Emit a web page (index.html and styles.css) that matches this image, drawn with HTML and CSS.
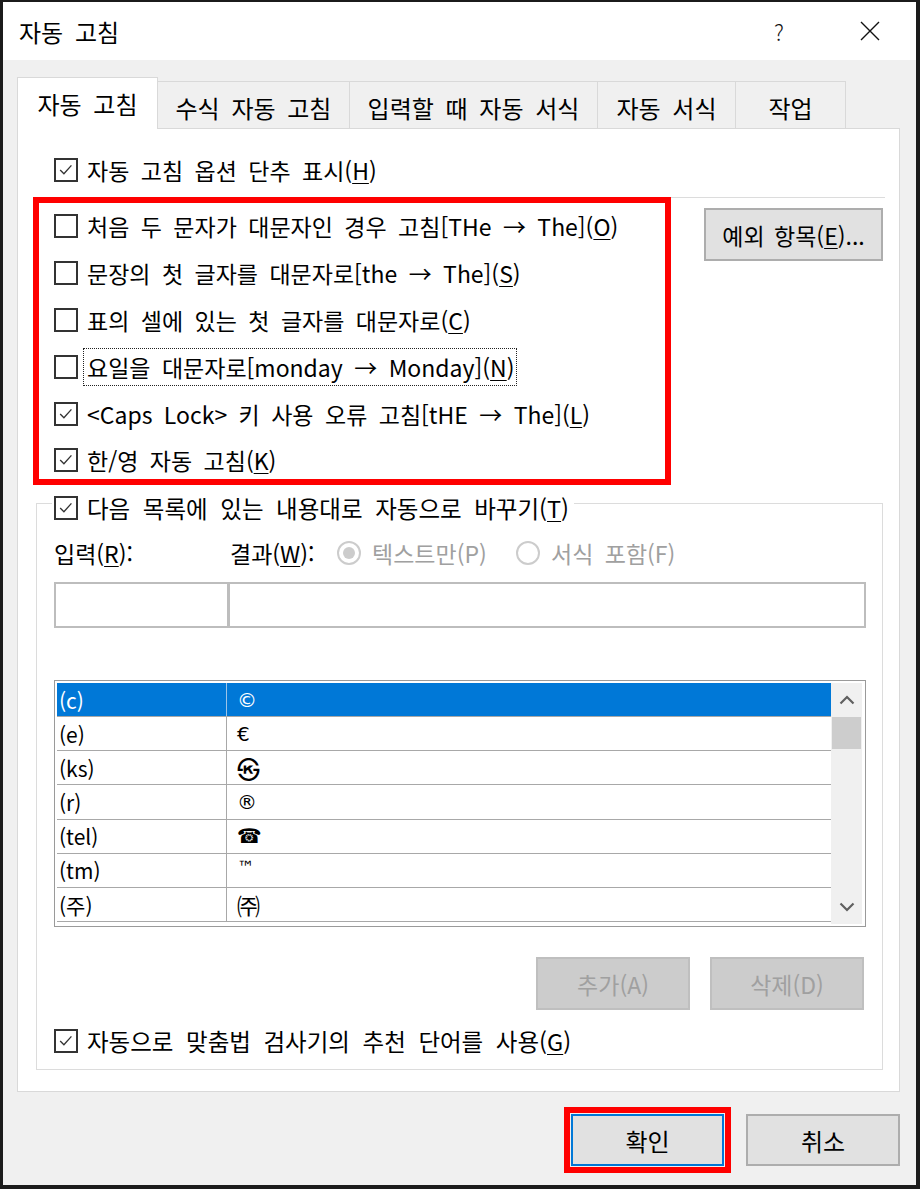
FILE: index.html
```html
<!DOCTYPE html>
<html lang="ko">
<head>
<meta charset="utf-8">
<title>자동 고침</title>
<link rel="stylesheet" href="styles.css">
</head>
<body>
<div class="window">
  <div class="titlebar">
    <span class="title">자동 고침</span>
    <span class="help">?</span>
    <span class="close"><svg width="20" height="20" viewBox="0 0 20 20"><path d="M1 1 L19 19 M19 1 L1 19" stroke="#111" stroke-width="1.4" fill="none"/></svg></span>
  </div>
  <div class="body">
    <div class="tabs">
      <div class="tab active t1">자동 고침</div>
      <div class="tab t2">수식 자동 고침</div>
      <div class="tab t3">입력할 때 자동 서식</div>
      <div class="tab t4">자동 서식</div>
      <div class="tab t5">작업</div>
    </div>
    <div class="panel">
      <div class="check top-check"><span class="box on"><svg viewBox="0 0 24 24"><path d="M5 12 L9.5 16.5 L18.5 6.5" stroke="#333" stroke-width="1.6" fill="none"/></svg></span><span>자동 고침 옵션 단추 표시(<u>H</u>)</span></div>
      <div class="sep"></div>
      <div class="opts">
        <div class="redbox">
          <div class="check"><span class="box"></span><span>처음 두 문자가 대문자인 경우 고침[THe → The](<u>O</u>)</span></div>
          <div class="check"><span class="box"></span><span>문장의 첫 글자를 대문자로[the → The](<u>S</u>)</span></div>
          <div class="check"><span class="box"></span><span>표의 셀에 있는 첫 글자를 대문자로(<u>C</u>)</span></div>
          <div class="check"><span class="box"></span><span class="focus">요일을 대문자로[monday → Monday](<u>N</u>)</span></div>
          <div class="check"><span class="box on"><svg viewBox="0 0 24 24"><path d="M5 12 L9.5 16.5 L18.5 6.5" stroke="#333" stroke-width="1.6" fill="none"/></svg></span><span>&lt;Caps Lock&gt; 키 사용 오류 고침[tHE → The](<u>L</u>)</span></div>
          <div class="check"><span class="box on"><svg viewBox="0 0 24 24"><path d="M5 12 L9.5 16.5 L18.5 6.5" stroke="#333" stroke-width="1.6" fill="none"/></svg></span><span>한/영 자동 고침(<u>K</u>)</span></div>
        </div>
        <div class="btn except">예외 항목(<u>E</u>)...</div>
      </div>
      <div class="group">
        <div class="legend check"><span class="box on"><svg viewBox="0 0 24 24"><path d="M5 12 L9.5 16.5 L18.5 6.5" stroke="#333" stroke-width="1.6" fill="none"/></svg></span><span class="wide">다음 목록에 있는 내용대로 자동으로 바꾸기(<u>T</u>)</span></div>
        <div class="labels">
          <span class="lbl-in">입력(<u>R</u>):</span>
          <span class="lbl-out">결과(<u>W</u>):</span>
          <span class="opt opt1"><span class="radio on"></span>텍스트만(P)</span>
          <span class="opt"><span class="radio"></span>서식 포함(F)</span>
        </div>
        <div class="inputs">
          <div class="in-left"></div>
          <div class="in-right"></div>
        </div>
        <div class="list">
          <div class="rows">
            <div class="row sel"><span class="c1">(c)</span><span class="c2">©</span></div>
            <div class="row"><span class="c1">(e)</span><span class="c2">€</span></div>
            <div class="row"><span class="c1">(ks)</span><span class="c2 cjk">㉿</span></div>
            <div class="row"><span class="c1">(r)</span><span class="c2">®</span></div>
            <div class="row"><span class="c1">(tel)</span><span class="c2">☎</span></div>
            <div class="row"><span class="c1">(tm)</span><span class="c2 small">™</span></div>
            <div class="row"><span class="c1">(주)</span><span class="c2 cjk">㈜</span></div>
          </div>
          <div class="scroll">
            <div class="arrow"><svg width="16" height="10" viewBox="0 0 16 10"><path d="M1.5 8.5 L8 2 L14.5 8.5" stroke="#606060" stroke-width="2.2" fill="none"/></svg></div>
            <div class="thumb"></div>
            <div class="track"></div>
            <div class="arrow"><svg width="16" height="10" viewBox="0 0 16 10"><path d="M1.5 1.5 L8 8 L14.5 1.5" stroke="#606060" stroke-width="2.2" fill="none"/></svg></div>
          </div>
        </div>
        <div class="btn-row">
          <div class="btn disabled">추가(A)</div>
          <div class="btn disabled">삭제(D)</div>
        </div>
        <div class="check bottom-check"><span class="box on"><svg viewBox="0 0 24 24"><path d="M5 12 L9.5 16.5 L18.5 6.5" stroke="#333" stroke-width="1.6" fill="none"/></svg></span><span class="wide">자동으로 맞춤법 검사기의 추천 단어를 사용(<u>G</u>)</span></div>
      </div>
    </div>
    <div class="footer">
      <div class="mark"><div class="btn ok">확인</div></div>
      <div class="btn cancel">취소</div>
    </div>
  </div>
</div>
</body>
</html>
```

FILE: styles.css
```css
* { box-sizing: border-box; }
html, body { margin: 0; padding: 0; }
body {
  width: 920px;
  height: 1189px;
  background: #1b1b1b;
  font-family: "Noto Sans CJK KR", "Noto Sans", sans-serif;
  font-size: 23px;
  word-spacing: 5px;
  color: #000;
}
u { text-underline-offset: 3px; text-decoration-thickness: 1px; }

.window {
  width: 920px;
  height: 1189px;
  border-style: solid;
  border-color: #1b1b1b;
  border-width: 2px 4px 4px 3px;
  display: flex;
  flex-direction: column;
  background: #f0f0f0;
}

.titlebar {
  height: 58px;
  flex: none;
  background: #fff;
  display: flex;
  align-items: center;
  padding-left: 16px;
}
.title { flex: 1; font-size: 24px; }
.help {
  width: 90px;
  text-align: center;
  font-size: 22px;
  font-weight: 300;
  color: #111;
}
.close {
  width: 92px;
  display: flex;
  justify-content: center;
  align-items: center;
}

.body {
  flex: 1;
  padding: 17px 16px 0 14px;
  display: flex;
  flex-direction: column;
}

.tabs {
  display: flex;
  align-items: flex-end;
  height: 52px;
  margin-bottom: -1px;
  position: relative;
  z-index: 1;
  font-size: 24px;
  white-space: nowrap;
}
.tab {
  height: 47px;
  margin-bottom: 1px;
  margin-left: -1px;
  border: 1px solid #d9d9d9;
  border-bottom: none;
  background: #f0f0f0;
  display: flex;
  align-items: center;
  justify-content: center;
  padding-top: 4px;
}
.tab.active {
  height: 52px;
  margin-bottom: 0;
  margin-left: 0;
  background: #fff;
  padding-top: 0;
}
.t1 { width: 141px; }
.t2 { width: 193px; }
.t3 { width: 249px; }
.t4 { width: 139px; }
.t5 { width: 111px; }

.panel {
  height: 964px;
  background: #fff;
  border: 1px solid #d9d9d9;
  padding: 18px 14px 0 15px;
}

.check {
  display: flex;
  align-items: center;
  height: 46px;
  white-space: nowrap;
}
.wide { font-size: 23.5px; word-spacing: 6px; }
.box {
  width: 24px;
  height: 24px;
  flex: none;
  border: 2px solid #333;
  background: #fff;
  margin-right: 9px;
  display: flex;
}
.box svg { width: 20px; height: 20px; }
.top-check { margin-left: 21px; }

.sep {
  height: 1px;
  width: 850px;
  background: #dcdcdc;
  margin: 4px 0 0 2px;
}

.opts {
  display: flex;
  align-items: flex-start;
  margin-top: -1px;
}
.redbox {
  width: 638px;
  height: 288px;
  border: 6px solid #ff0000;
  padding-left: 15px;
}
.redbox .check { height: 46.8px; }
.focus {
  outline: 1px dotted #222;
  outline-offset: 0;
  padding: 1px 2px 1px 3px;
  margin-left: -3px;
}

.btn {
  display: flex;
  align-items: center;
  justify-content: center;
  background: #e1e1e1;
  border: 2px solid #adadad;
  white-space: nowrap;
  word-spacing: 3px;
}
.except {
  width: 179px;
  height: 53px;
  margin: 11px 0 0 33px;
}

.group {
  margin: 18px 2px 0 3px;
  border: 1px solid #dcdcdc;
  padding: 0 16px 5px 17px;
}
.legend {
  height: 30px;
  margin: -11px 0 0 -2px;
  padding: 0 5px 0 2px;
  width: fit-content;
  background: #fff;
}

.labels {
  display: flex;
  align-items: center;
  height: 30px;
  margin-top: 15px;
  white-space: nowrap;
}
.lbl-in { width: 176px; }
.lbl-out { width: 107px; }
.opt {
  display: flex;
  align-items: center;
  color: #a0a0a0;
}
.opt1 { width: 179px; }
.radio {
  width: 24px;
  height: 24px;
  border-radius: 50%;
  border: 2px solid #cccccc;
  background: #fff;
  margin-right: 11px;
  display: flex;
  align-items: center;
  justify-content: center;
}
.radio.on::after {
  content: "";
  width: 12px;
  height: 12px;
  border-radius: 50%;
  background: #cccccc;
}

.inputs {
  display: flex;
  height: 46px;
  margin-top: 14px;
}
.in-left {
  width: 175px;
  border: 2px solid #bdbdbd;
}
.in-right {
  flex: 1;
  border: 2px solid #bdbdbd;
  margin-left: -1px;
}

.list {
  margin-top: 52px;
  height: 247px;
  border: 1px solid #9a9a9a;
  padding: 2px 3px 2px 2px;
  display: flex;
  background: #fff;
  overflow: hidden;
  word-spacing: 0;
}
.rows { flex: 1; overflow: hidden; }
.row {
  display: flex;
  height: 34.17px;
  border-bottom: 1px solid #a8a8a8;
  font-size: 21px;
  align-items: stretch;
}
.c1 {
  width: 170px;
  border-right: 1px solid #a8a8a8;
  padding-left: 2px;
  display: flex;
  align-items: center;
}
.c2 {
  padding-left: 10px;
  display: flex;
  align-items: center;
  font-family: "DejaVu Sans", "Noto Sans CJK KR", sans-serif;
  font-size: 20px;
}
.c2.cjk { font-family: "Noto Sans CJK KR", sans-serif; font-size: 23px; }
.c2.small { font-size: 17px; padding-bottom: 6px; }
.row.sel { background: #0078d7; color: #fff; }
.row.sel .c1 { border-right-color: #9cc4e8; }

.scroll {
  width: 31px;
  background: #f0f0f0;
  display: flex;
  flex-direction: column;
  flex: none;
}
.arrow {
  height: 34px;
  display: flex;
  align-items: center;
  justify-content: center;
  flex: none;
}
.thumb {
  height: 32px;
  margin: 0 1px;
  background: #cdcdcd;
  flex: none;
}
.track { flex: 1; }

.btn-row {
  display: flex;
  justify-content: flex-end;
  gap: 20px;
  margin: 30px 2px 0 0;
}
.btn.disabled {
  width: 154px;
  height: 53px;
  background: #cccccc;
  border-color: #bfbfbf;
  color: #a0a0a0;
}
.bottom-check { margin-top: 8px; }

.footer {
  display: flex;
  justify-content: flex-end;
  align-items: center;
  gap: 15px;
  padding: 15px 0 0 0;
  font-size: 24px;
}
.mark {
  border: 6px solid #ff0000;
  padding: 1px;
}
.ok {
  width: 153px;
  height: 52px;
  border-color: #0078d7;
}
.cancel {
  width: 154px;
  height: 52px;
}
```
